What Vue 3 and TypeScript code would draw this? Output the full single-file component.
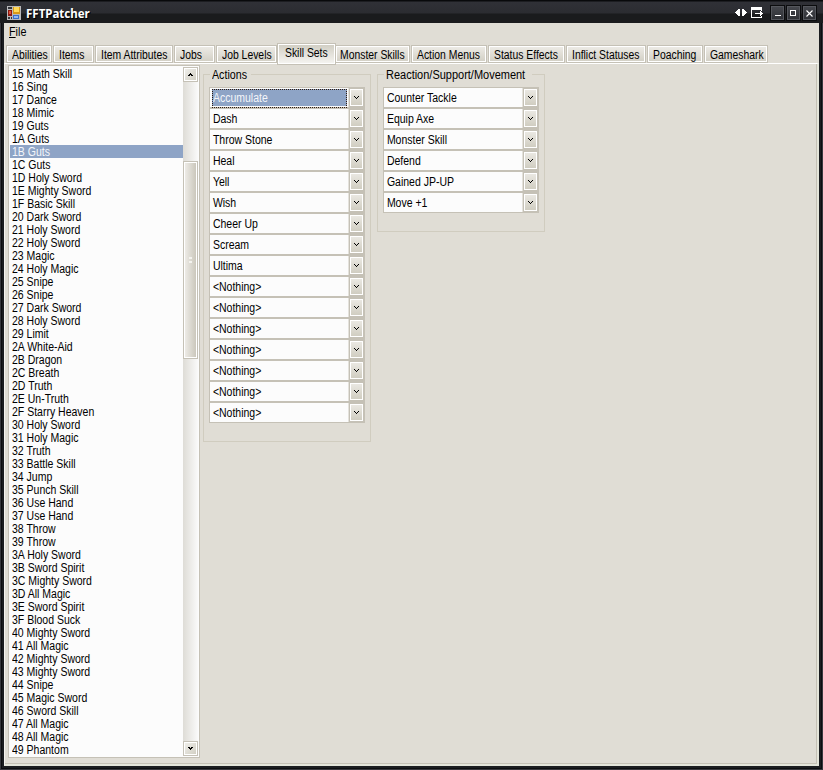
<script setup lang="ts">
interface Tab { label: string; width: number; kind?: string }

const tabs: Tab[] = [
  { label: 'Abilities', width: 46 },
  { label: 'Items', width: 41 },
  { label: 'Item Attributes', width: 78 },
  { label: 'Jobs', width: 41 },
  { label: 'Job Levels', width: 61 },
  { label: 'Skill Sets', width: 59, kind: 'active' },
  { label: 'Monster Skills', width: 75, kind: 'tucked' },
  { label: 'Action Menus', width: 76 },
  { label: 'Status Effects', width: 77 },
  { label: 'Inflict Statuses', width: 80 },
  { label: 'Poaching', width: 56 },
  { label: 'Gameshark', width: 64 },
]

const firstId = 0x15
const selectedId = 0x1b
const names: string[] = [
  'Math Skill', 'Sing', 'Dance', 'Mimic', 'Guts', 'Guts', 'Guts', 'Guts', 'Holy Sword', 'Mighty Sword', 'Basic Skill',
  'Dark Sword', 'Holy Sword', 'Holy Sword', 'Magic', 'Holy Magic', 'Snipe', 'Snipe', 'Dark Sword', 'Holy Sword', 'Limit',
  'White-Aid', 'Dragon', 'Breath', 'Truth', 'Un-Truth', 'Starry Heaven',
  'Holy Sword', 'Holy Magic', 'Truth', 'Battle Skill', 'Jump', 'Punch Skill', 'Use Hand', 'Use Hand', 'Throw', 'Throw',
  'Holy Sword', 'Sword Spirit', 'Mighty Sword', 'All Magic', 'Sword Spirit', 'Blood Suck',
  'Mighty Sword', 'All Magic', 'Mighty Sword', 'Mighty Sword', 'Snipe', 'Magic Sword', 'Sword Skill', 'All Magic', 'All Magic', 'Phantom',
]
const skillSets = names.map((name, i) => ({ id: firstId + i, name }))
const hex = (n: number): string => n.toString(16).toUpperCase()

const nothing = '<Nothing>'
const groups: { title: string; items: string[]; focused: number }[] = [
  {
    title: 'Actions',
    focused: 0,
    items: ['Accumulate', 'Dash', 'Throw Stone', 'Heal', 'Yell', 'Wish', 'Cheer Up', 'Scream', 'Ultima', ...Array<string>(7).fill(nothing)],
  },
  {
    title: 'Reaction/Support/Movement',
    focused: -1,
    items: ['Counter Tackle', 'Equip Axe', 'Monster Skill', 'Defend', 'Gained JP-UP', 'Move +1'],
  },
]
</script>

<template>
  <div class="window">
    <header class="titlebar">
      <svg class="logo" width="14" height="14" viewBox="0 0 14 14" shape-rendering="crispEdges">
        <rect width="14" height="14" fill="#b9b9bb" />
        <rect x="1" y="1" width="4" height="2" fill="#33343a" />
        <rect x="1" y="4" width="4" height="6" fill="#8e1a12" />
        <rect x="2" y="5" width="2" height="3" fill="#e0543a" />
        <rect x="1" y="11" width="2" height="2" fill="#33343a" />
        <rect x="4" y="11" width="1" height="2" fill="#33343a" />
        <rect x="6" y="1" width="7" height="7" fill="#d99a18" />
        <rect x="7" y="1" width="5" height="5" fill="#ffd95a" />
        <rect x="6" y="9" width="6" height="4" fill="#3a6fc8" />
        <rect x="7" y="10" width="4" height="2" fill="#8fb8f5" />
      </svg>
      <span class="title">FFTPatcher</span>
      <svg class="extras" width="30" height="12" viewBox="0 0 30 12" shape-rendering="crispEdges" fill="#fff">
        <path d="M0 5h1v-1h1v-1h1v-1h2v7h-2v-1h-1v-1h-1v-1h-1zM7 2h2v1h1v1h1v1h1v1h-1v1h-1v1h-1v1h-2z" />
        <path d="M16 0h11v4h-1v-1h-9v7h9v-1h1v2h-11zM20 6h5v-2h1v1h1v1h1v1h-1v1h-1v1h-1v-2h-5z" />
      </svg>
      <div class="controls">
        <span class="control"><svg width="13" height="13" shape-rendering="crispEdges"><path d="M4 9h6v1h-6z" fill="#fff" /></svg></span>
        <span class="control"><svg width="13" height="13" shape-rendering="crispEdges"><path d="M3 4h6v6h-6zM4 5v4h4v-4z" fill="#fff" fill-rule="evenodd" /></svg></span>
        <span class="control"><svg width="13" height="13"><path d="M3.5 4.5l6 6M9.5 4.5l-6 6" stroke="#fff" stroke-width="1.1" /></svg></span>
      </div>
    </header>

    <nav class="menu"><span class="t"><u>F</u>ile</span></nav>

    <div class="tabs">
      <div v-for="tab in tabs" :key="tab.label" class="tab" :class="tab.kind" :style="{ width: tab.width + 'px' }">
        <span class="t">{{ tab.label }}</span>
      </div>
    </div>

    <main class="page">
      <section class="list">
        <ul>
          <li v-for="s in skillSets" :key="s.id" :class="{ selected: s.id === selectedId }">
            <span class="t">{{ hex(s.id) }} {{ s.name }}</span>
          </li>
        </ul>
        <div class="scroll">
          <div class="arrow"><svg width="5" height="3" shape-rendering="crispEdges"><path d="M2 0h1v1h1v1h1v1h-2v-1h-1v1h-2v-1h1v-1h1z" /></svg></div>
          <div class="thumb"><i></i></div>
          <div class="arrow last"><svg width="5" height="3" shape-rendering="crispEdges"><path d="M0 0h2v1h1v-1h2v1h-1v1h-1v1h-1v-1h-1v-1h-1z" /></svg></div>
        </div>
      </section>

      <section v-for="g in groups" :key="g.title" class="group">
        <h2><span class="t">{{ g.title }}</span></h2>
        <div class="combos">
          <div v-for="(item, i) in g.items" :key="i" class="combo" :class="{ focused: i === g.focused }">
            <div class="value"><span class="t">{{ item }}</span></div>
            <div class="drop"><svg width="5" height="3" shape-rendering="crispEdges"><path d="M0 0h1v1h1v1h1v-1h1v-1h1v1h-1v1h-1v1h-1v-1h-1v-1h-1z" /></svg></div>
          </div>
        </div>
      </section>
    </main>
  </div>
</template>

<style>
body { margin: 0; background: #111; }
</style>

<style scoped>
* { box-sizing: border-box; }
.window {
  width: 823px;
  height: 770px;
  display: flex;
  flex-direction: column;
  padding: 0 4px 4px;
  background: #1b1d20;
  box-shadow: inset 0 0 0 1px #37383e, inset 0 0 0 2px #0c0d10;
  font: 12px/13px "Liberation Sans", Arial, sans-serif;
  color: #000;
  overflow: hidden;
}
.t { display: inline-block; white-space: pre; transform: scaleX(.875); transform-origin: 0 50%; }

.titlebar {
  height: 23px;
  flex: none;
  margin: 0 -4px;
  padding: 3px 6px 0 7px;
  display: flex;
  align-items: center;
  background: linear-gradient(#08090b 0 1px, #303137 2px, #2b2c31 13px, #1a1b1d 14px, #1a1b1d);
}
.title {
  margin-left: 5px;
  color: #fff;
  font: bold 11.5px/15px "Noto Sans", sans-serif;
  text-shadow: 1px 1px #000;
}
.extras { margin-left: auto; }
.controls { display: flex; gap: 1px; margin-left: 5px; }
.control {
  width: 15px;
  height: 16px;
  border: 1px solid #0b0c0e;
  background: linear-gradient(#46484e, #2d2f34);
  box-shadow: inset 0 0 0 1px #54565c;
}
.control svg { display: block; }

.menu { height: 20px; flex: none; background: #e0ddd5; padding: 3px 5px; }
.menu .t { transform: scaleX(.9); }

.tabs {
  height: 20px;
  flex: none;
  display: flex;
  align-items: flex-end;
  gap: 1px;
  padding-left: 2px;
  background: #e0ddd5;
}
.tab {
  flex: none;
  height: 18px;
  padding: 3px 0 0 5px;
  border: 1px solid #c5c1b6;
  background: linear-gradient(#eeece7, #d2cfc4);
  box-shadow: inset 0 0 0 1px #fff;
  white-space: nowrap;
}
.tab .t { transform: scaleX(.865); }
.tab.tucked { padding-left: 4px; }
.tab.active {
  position: relative;
  z-index: 1;
  height: 22px;
  margin: 0 -2px -2px -1px;
  padding: 3px 0 0 7px;
  background: linear-gradient(#d0cdc2, #f6f5f2);
}

.page {
  flex: 1;
  min-height: 0;
  display: flex;
  align-items: flex-start;
  padding: 2px 0 0 3px;
  background: #e0ddd5;
  border-top: 1px solid #fff;
  border-left: 1px solid #f4f3ef;
  border-right: 2px solid #e4e5da;
  border-bottom: 2px solid #e4e5da;
  box-shadow: inset -1px -1px #c5c1b6;
}

.list {
  width: 192px;
  height: 693px;
  margin-top: -1px;
  display: flex;
  border: 1px solid #c5c1b6;
  background: #fcfcfc;
}
ul { list-style: none; margin: 0; padding: 1px 0 0 1px; width: 174px; }
li { height: 13px; padding-left: 2px; line-height: 15px; }
li.selected { background: #8ea4c6; color: #f4f6fa; }

.scroll {
  width: 15px;
  margin: 1px 0;
  display: flex;
  flex-direction: column;
  background: linear-gradient(90deg, #dedcd6, #fafafa);
}
.arrow {
  height: 15px;
  flex: none;
  display: grid;
  place-items: center;
  border: 1px solid #c5c1b6;
  box-shadow: inset 0 0 0 1px #fff;
  background: linear-gradient(135deg, #f2f1ed, #cfccc0);
}
.arrow.last { margin-top: auto; }
.thumb {
  height: 198px;
  margin-top: 79px;
  display: grid;
  place-items: center;
  border: 1px solid #c5c1b6;
  box-shadow: inset 0 0 0 1px #fff;
  background: linear-gradient(90deg, #f0eeea, #c8c4b8);
}
.thumb i { width: 3px; height: 7px; background: repeating-linear-gradient(#f4f3ef 0 2px, transparent 2px 4px); }

.group {
  width: 168px;
  margin: 8px 0 0 3px;
  padding: 0 5px 18px;
  border: 1px solid #d0ccbf;
}
.group + .group { margin-left: 6px; }
h2 {
  width: max-content;
  height: 13px;
  margin: -7px 0 6px 1px;
  padding: 0 0 0 2px;
  background: #e0ddd5;
  font: inherit;
  line-height: 15px;
}
h2 .t { margin-right: -6px; transform: scaleX(.915); }
.group:nth-child(2) h2 .t { margin-right: 0; transform: scaleX(.89); }
.combos { width: 156px; }
.combo {
  height: 21px;
  display: flex;
  border: 1px solid #c5c1b6;
  background: #c5c1b6;
}
.value { width: 139px; height: 19px; padding: 1px 2px; background: #fcfcfc; border-right: 1px solid #e4e2dc; }
.value .t { display: block; width: 134px; height: 17px; padding: 0 0 0 1px; line-height: 18px; }
.focused .value {
  padding: 1px 1px 1px 2px;
  color: #f4f6fa;
  background: linear-gradient(#8ea4c6, #8ea4c6) content-box no-repeat, #fcfcfc;
}
.focused .value::after {
  content: "";
  display: block;
  height: 17px;
  margin-top: -17px;
  border: 1px dotted #301c10;
}
.drop {
  width: 13px;
  height: 17px;
  margin: 1px 0 0 1px;
  display: grid;
  place-items: center;
  padding-bottom: 1px;
  border: 1px solid #fff;
  background: linear-gradient(#eae8e2, #d0cdc1);
}
</style>
